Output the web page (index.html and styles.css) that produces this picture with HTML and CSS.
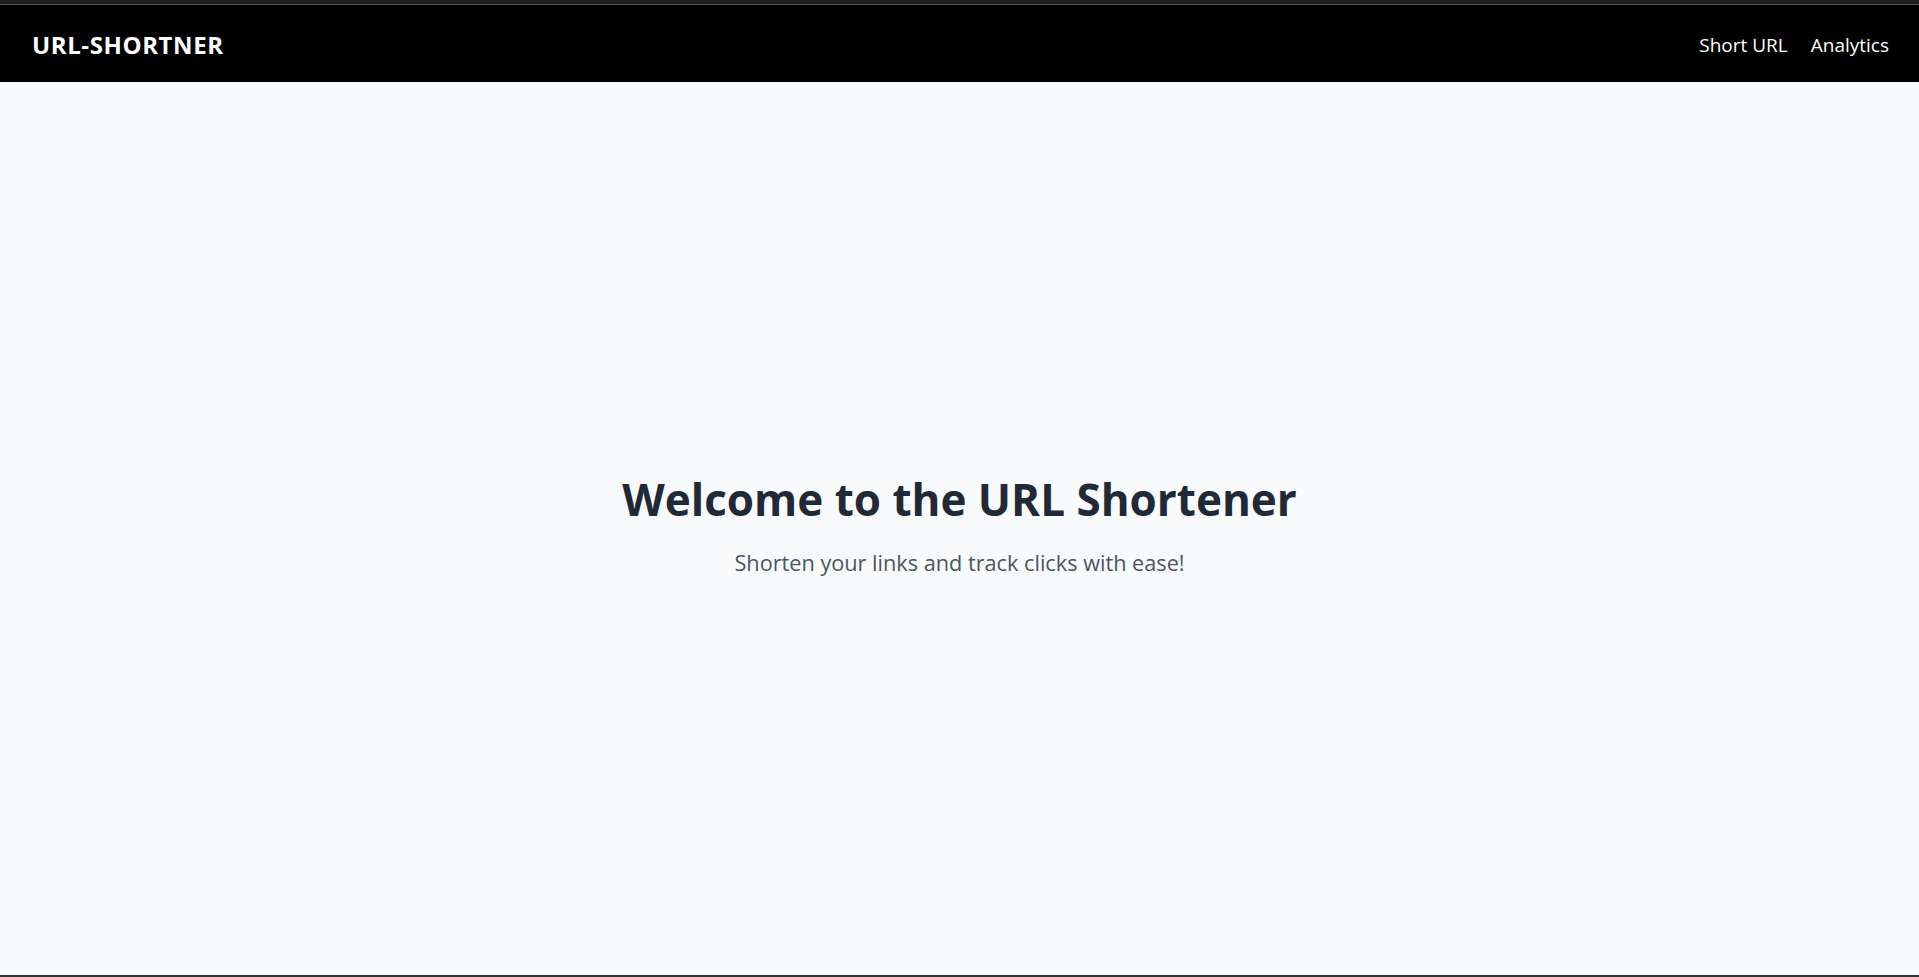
FILE: index.html
```html
<!DOCTYPE html>
<html lang="en">
<head>
<meta charset="utf-8">
<title>URL-SHORTNER</title>
<link rel="stylesheet" href="styles.css">
</head>
<body>
<div class="frame-top"></div>
<nav class="navbar">
  <a class="brand" href="#">URL-SHORTNER</a>
  <div class="nav-links">
    <a href="#">Short URL</a>
    <a href="#">Analytics</a>
  </div>
</nav>
<main class="hero">
  <h1 class="hero-title">Welcome to the URL Shortener</h1>
  <p class="hero-sub">Shorten your links and track clicks with ease!</p>
</main>
<div class="frame-bottom"></div>
</body>
</html>
```
FILE: styles.css
```css
* { box-sizing: border-box; }
html, body { margin: 0; padding: 0; }
body {
  height: 100vh;
  display: flex;
  flex-direction: column;
  background: #f9fafb;
  font-family: "Open Sans", "Noto Sans", sans-serif;
  overflow: hidden;
}
.frame-top {
  height: 5px;
  background: #1f1f1f;
  border-bottom: 1px solid #4a5c62;
  flex: none;
}
.frame-bottom {
  height: 2px;
  background: #333;
  flex: none;
}
.navbar {
  height: 77px;
  flex: none;
  background: #000;
  display: flex;
  align-items: center;
  justify-content: space-between;
  padding: 2px 30px 0 32px;
}
.brand {
  color: #fff;
  text-decoration: none;
  font-weight: 700;
  font-size: 24px;
  letter-spacing: 0.6px;
}
.nav-links {
  display: flex;
  gap: 23px;
}
.nav-links a {
  color: #fff;
  text-decoration: none;
  font-size: 19px;
}
.hero {
  flex: 1;
  display: flex;
  flex-direction: column;
  align-items: center;
  justify-content: center;
  padding-bottom: 2px;
}
.hero-title {
  margin: 0;
  font-size: 44px;
  line-height: 44px;
  font-weight: 700;
  color: #1f2937;
}
.hero-sub {
  margin: 27px 0 0;
  font-size: 21.7px;
  line-height: 30px;
  color: #4b5563;
}
```
